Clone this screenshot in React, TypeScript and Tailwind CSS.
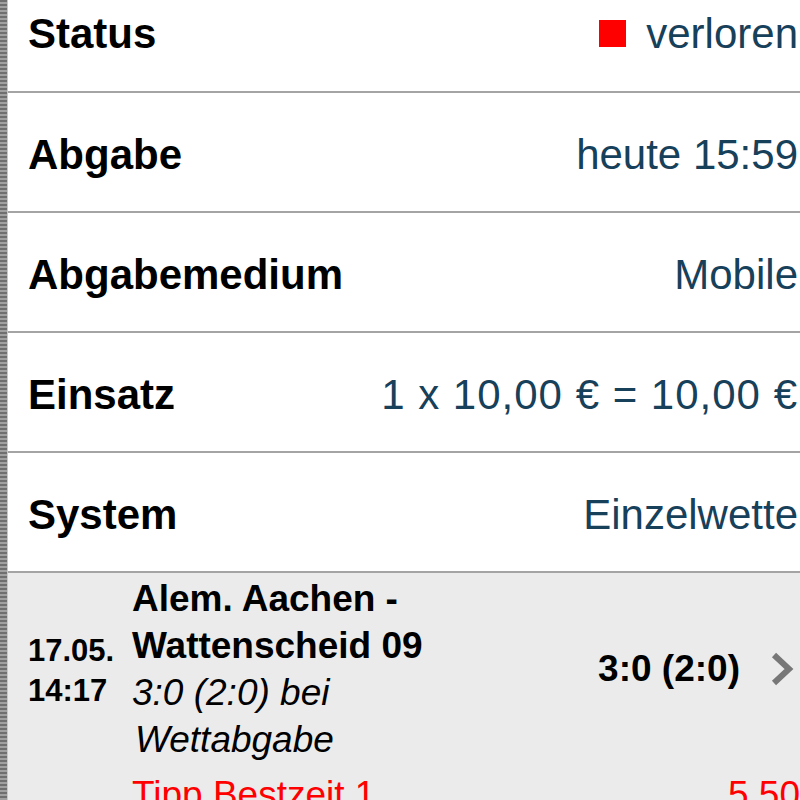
import React from 'react';

const ROWS = [
  { label: 'Abgabe', value: 'heute 15:59', wide: false },
  { label: 'Abgabemedium', value: 'Mobile', wide: false },
  { label: 'Einsatz', value: '1 x 10,00 € = 10,00 €', wide: true },
  { label: 'System', value: 'Einzelwette', wide: false },
];

const App: React.FC = () => {
  return (
    <div className="w-[800px] h-[800px] overflow-hidden flex bg-white font-['Liberation_Sans',Arial,sans-serif]">
      <div className="w-[8px] shrink-0 bg-[repeating-linear-gradient(to_bottom,#6f6f6f_0px,#6f6f6f_2px,#a0a0a0_2px,#a0a0a0_4px)] border-r border-[#c8c8c8]" />
      <div className="flex-1 flex flex-col">
        {/* first row is cut by the top of the screen */}
        <div className="h-[93px] shrink-0 flex items-center justify-between pl-[20px] pr-[2px] pb-[24px] border-b-2 border-[#a4a4a4]">
          <span className="text-[42px] font-bold text-black leading-none">Status</span>
          <span className="flex items-center gap-[20px] text-[42px] leading-none text-[#17405a]">
            <span className="w-[27px] h-[27px] bg-[#ff0000]" />
            verloren
          </span>
        </div>
        {ROWS.map((r) => (
          <div key={r.label} className="h-[120px] shrink-0 flex items-center justify-between pl-[20px] pr-[2px] pt-[6px] border-b-2 border-[#a4a4a4]">
            <span className="text-[42px] font-bold text-black leading-none">{r.label}</span>
            <span className={`text-[42px] leading-none text-[#17405a] whitespace-nowrap ${r.wide ? 'tracking-[1px]' : ''}`}>{r.value}</span>
          </div>
        ))}
        <div className="flex-1 bg-[#ebebeb] flex flex-col pl-[20px] pr-[6px] pt-[2px]">
          <div className="flex items-center">
            <div className="w-[104px] shrink-0 text-[31px] font-bold leading-[40px] text-black pt-[4px]">
              <div>17.05.</div>
              <div>14:17</div>
            </div>
            <div className="flex-1 text-[37px] leading-[47px] text-black">
              <div className="font-bold">Alem. Aachen -</div>
              <div className="font-bold">Wattenscheid 09</div>
              <div className="italic">3:0 (2:0) bei</div>
              <div className="italic pl-[3px]">Wettabgabe</div>
            </div>
            <div className="flex items-center gap-[30px]">
              <span className="text-[37px] font-bold text-black">3:0 (2:0)</span>
              <svg width="24" height="34" viewBox="0 0 24 34">
                <path d="M4 3 L19 17 L4 31" fill="none" stroke="#777777" strokeWidth="6" />
              </svg>
            </div>
          </div>
          <div className="flex justify-between text-[37px] text-[#ff0000] leading-[47px] pl-[104px] mt-[8px]">
            <span>Tipp Bestzeit 1</span>
            <span className="mr-[-6px]">5,50</span>
          </div>
        </div>
      </div>
    </div>
  );
};

export default App;
